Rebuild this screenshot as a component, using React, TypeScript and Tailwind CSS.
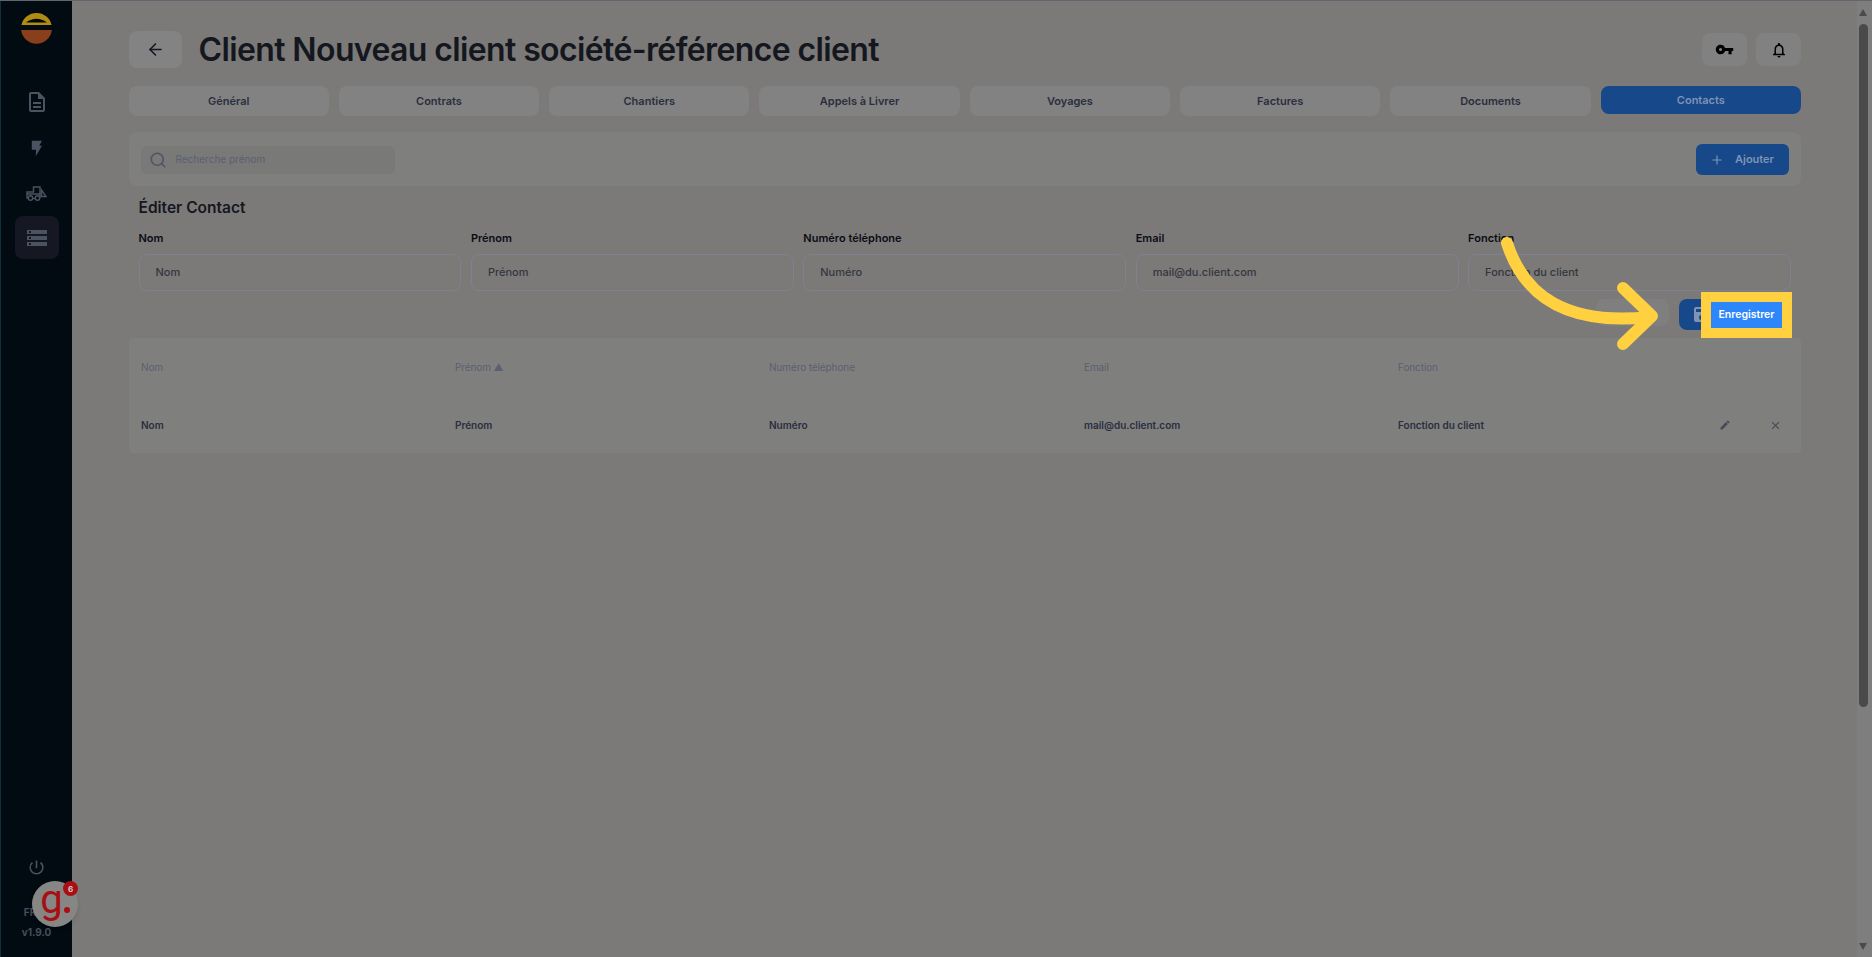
import { ArrowLeft, Plus, Search } from "lucide-react";
import {
  MdClose,
  MdEdit,
  MdOutlineDescription,
  MdOutlineNotifications,
  MdPowerSettingsNew,
  MdStorage,
  MdVpnKey,
} from "react-icons/md";

const tabs = ["Général", "Contrats", "Chantiers", "Appels à Livrer", "Voyages", "Factures", "Documents"];

const fields = [
  { label: "Nom", value: "Nom" },
  { label: "Prénom", value: "Prénom" },
  { label: "Numéro téléphone", value: "Numéro" },
  { label: "Email", value: "mail@du.client.com" },
  { label: "Fonction", value: "Fonction du client" },
];

function Logo() {
  return (
    <svg width="31" height="31" viewBox="0 0 31 31" className="block">
      <path d="M0.4 12 A15.5 15.5 0 0 1 30.6 12 Z" fill="#b08d10" />
      <path d="M5 9.5 Q15.5 2 26 9.5 Z" fill="#02090f" />
      <path d="M0.1 17 H30.9 A15.5 15.5 0 0 1 0.1 17 Z" fill="#8a3f1c" />
    </svg>
  );
}

function Bolt() {
  return (
    <svg width="11" height="17" viewBox="0 0 14 20" fill="#4b5360" className="block">
      <path d="M1 0 H14 L10.5 6.5 H14 L6 20 L6.5 11.5 H1 Z" />
    </svg>
  );
}

function Loader() {
  return (
    <svg width="21" height="15" viewBox="0 0 21 15" fill="none" stroke="#4b5360" strokeWidth="1.4" className="block">
      <path d="M7.5 6 V1 H14 V8" />
      <path d="M6.5 12.5 H9 M14 12 V8 H1 V12 H2" />
      <path d="M1 8 V6 H8" />
      <circle cx="4.5" cy="12" r="2.2" />
      <circle cx="11.5" cy="12" r="2.2" />
      <path d="M15.5 4 L20 10.5 H15.5 Z" />
    </svg>
  );
}

function SaveIcon() {
  return (
    <svg width="15" height="15" viewBox="0 0 15 15" fill="#7f93b5" className="block">
      <path d="M2 0 H11 L15 4 V13 A2 2 0 0 1 13 15 H2 A2 2 0 0 1 0 13 V2 A2 2 0 0 1 2 0 Z M2 2 V5 H11 V2 Z M7.5 8 A2.5 2.5 0 1 0 7.5 13 A2.5 2.5 0 1 0 7.5 8 Z" fillRule="evenodd" />
    </svg>
  );
}

function Sidebar() {
  return (
    <aside className="w-[72px] h-full shrink-0 bg-[#020a12] border-l border-[#12303c] flex flex-col items-center pt-[12px] pb-[17px]">
      <Logo />
      <nav className="flex flex-col items-center mt-[45px] w-full">
        <div className="h-[20px] flex items-center mt-[3px]">
          <MdOutlineDescription className="text-[#4b5360] text-[24px]" />
        </div>
        <div className="h-[17px] flex items-center mt-[28px]">
          <Bolt />
        </div>
        <div className="h-[15px] flex items-center mt-[29px]">
          <Loader />
        </div>
        <div className="w-[44px] h-[43px] rounded-lg bg-[#151823] flex items-center justify-center mt-[15px]">
          <MdStorage className="text-[#4b5360] text-[24px]" />
        </div>
      </nav>
      <div className="mt-auto flex flex-col items-center">
        <MdPowerSettingsNew className="text-[#4b5360] text-[19px]" />
        <span className="mt-[27px] -ml-[13px] text-[10px] leading-[16px] font-bold text-[#474e5a]">FR</span>
        <span className="mt-[4px] text-[10px] leading-[16px] font-bold text-[#474e5a]">v1.9.0</span>
      </div>
    </aside>
  );
}

function Scrollbar() {
  return (
    <div className="w-[15px] h-full shrink-0 bg-[#7e7e7e] flex flex-col items-center pl-[1px] pr-[4px] pt-[8px] pb-[7px]">
      <div className="w-0 h-0 border-l-[4px] border-r-[4px] border-b-[7px] border-l-transparent border-r-transparent border-b-[#4b4b4b]" />
      <div className="w-[9px] h-[683px] rounded-full bg-[#4a4a4a] mt-[8px]" />
      <div className="mt-auto w-0 h-0 border-l-[4px] border-r-[4px] border-t-[7px] border-l-transparent border-r-transparent border-t-[#4b4b4b]" />
    </div>
  );
}

export default function App() {
  return (
    <div className="relative w-[1872px] h-[957px] overflow-hidden flex bg-[#7b7a78] border-t border-[#62676e] font-['Inter','Liberation_Sans',sans-serif]">
      <Sidebar />

      <main className="flex-1 min-w-0 pl-[56.5px] pr-[56px] pt-[30px]">
        <header className="flex items-center h-[37px]">
          <button className="w-[53px] h-[37px] rounded-lg bg-[#838383] flex items-center justify-center">
            <ArrowLeft className="w-[19px] h-[19px] text-[#14181f]" strokeWidth={2} />
          </button>
          <h1 className="ml-[17px] text-[32px] leading-[37px] font-semibold text-[#15171f] tracking-[-0.62px]">
            Client Nouveau client société-référence client
          </h1>
          <div className="ml-auto flex gap-[9px]">
            <button className="w-[45px] h-[33px] rounded-lg bg-[#818181] flex items-center justify-center">
              <MdVpnKey className="text-[19px] text-black" />
            </button>
            <button className="w-[45px] h-[33px] rounded-lg bg-[#818181] flex items-center justify-center">
              <MdOutlineNotifications className="text-[18px] text-black" />
            </button>
          </div>
        </header>

        <div className="flex gap-[10px] mt-[18px]">
          {tabs.map((t) => (
            <div key={t} className="flex-1 h-[30px] rounded-lg bg-[#828282] flex items-center justify-center text-[11px] font-semibold text-[#2a2e3e]">
              {t}
            </div>
          ))}
          <div className="flex-1 h-[28px] rounded-lg bg-[#16488a] flex items-center justify-center text-[11px] font-semibold text-[#7f93b5]">
            Contacts
          </div>
        </div>

        <section className="mt-[16px] h-[54px] rounded-lg bg-[#7f7f7e] flex items-center justify-between pl-[12px] pr-[12px] pt-[1px]">
          <div className="w-[254px] h-[28px] rounded-md bg-[#797978] flex items-center pl-[8px]">
            <Search className="w-[18px] h-[18px] text-[#4f5563]" strokeWidth={2.2} />
            <span className="ml-[9px] text-[10px] text-[#5a6070]">Recherche prénom</span>
          </div>
          <button className="w-[93px] h-[31px] rounded-md bg-[#16488a] flex items-center text-[11px] font-semibold text-[#7f93b5] pl-[14px]">
            <Plus className="w-[14px] h-[14px]" strokeWidth={2} />
            <span className="ml-[11px]">Ajouter</span>
          </button>
        </section>

        <section className="pl-[10px] pr-[10px]">
          <h2 className="mt-[12px] text-[15.5px] leading-[20px] font-semibold text-[#15171f]">Éditer Contact</h2>
          <div className="grid grid-cols-5 gap-[9.5px] mt-[12px]">
            {fields.map((f) => (
              <div key={f.label}>
                <label className="block text-[11px] leading-[16px] font-semibold text-[#0b0d14]">{f.label}</label>
                <div className="mt-[8px] h-[37px] rounded-lg border border-[#7f828e] flex items-center pl-[16px] text-[11px] font-medium text-[#34363f]">
                  {f.value}
                </div>
              </div>
            ))}
          </div>
          <div className="flex justify-end gap-[10px] mt-[8px]">
            <div className="w-[73px] h-[27px] rounded-lg bg-[#7f7f7f]" />
            <button className="w-[112px] h-[31px] rounded-lg bg-[#16488a] flex items-center pl-[15px]">
              <SaveIcon />
            </button>
          </div>
        </section>

        <section className="mt-[8px] h-[115px] bg-[#7f7f7e] rounded-sm">
          <div className="grid grid-cols-[314px_314px_315px_314px_321px_50px_1fr] items-center h-[58px] pl-[12.5px] text-[10px] tracking-[-0.1px] text-[#5a6070]">
            <span>Nom</span>
            <span>Prénom ▲</span>
            <span>Numéro téléphone</span>
            <span>Email</span>
            <span>Fonction</span>
          </div>
          <div className="grid grid-cols-[314px_314px_315px_314px_321px_50px_1fr] items-center h-[58px] pl-[12.5px] text-[10px] font-semibold text-[#2a2e3e]">
            <span>Nom</span>
            <span>Prénom</span>
            <span>Numéro</span>
            <span>mail@du.client.com</span>
            <span>Fonction du client</span>
            <MdEdit className="text-[12px] text-[#444955]" />
            <MdClose className="text-[13px] text-[#444955]" />
          </div>
        </section>
      </main>

      <Scrollbar />

      {/* annotation laid over the screenshot */}
      <div className="absolute left-[1701px] top-[291px] w-[91px] h-[46px] border-[10px] border-[#ffd03f] bg-[#2e86fb] flex items-center justify-center text-[10.5px] font-semibold text-white">
        Enregistrer
      </div>
      <svg className="absolute left-[1490px] top-[229px]" width="180" height="125" viewBox="0 0 180 125" fill="none" stroke="#ffd03f" strokeWidth="12" strokeLinecap="round" strokeLinejoin="round">
        <path d="M17 13 C 34 66, 76 96, 160 87" />
        <path d="M133 58 L162 86 L133 114" />
      </svg>

      {/* support widget */}
      <div className="absolute left-[32px] top-[880px] w-[46px] h-[46px] rounded-full bg-[#868685] shadow-md flex items-center justify-center">
        <span className="font-['Roboto',sans-serif] text-[40px] leading-[40px] text-[#a80e12] -mt-[8px] -ml-[7px]">g</span>
        <span className="absolute left-[32px] top-[26px] w-[6px] h-[6px] rounded-full bg-[#a80e12]" />
      </div>
      <div className="absolute left-[63px] top-[880px] w-[15px] h-[15px] rounded-full bg-[#a80e12] flex items-center justify-center text-[8px] font-bold text-[#d8c8c8]">
        6
      </div>
    </div>
  );
}
